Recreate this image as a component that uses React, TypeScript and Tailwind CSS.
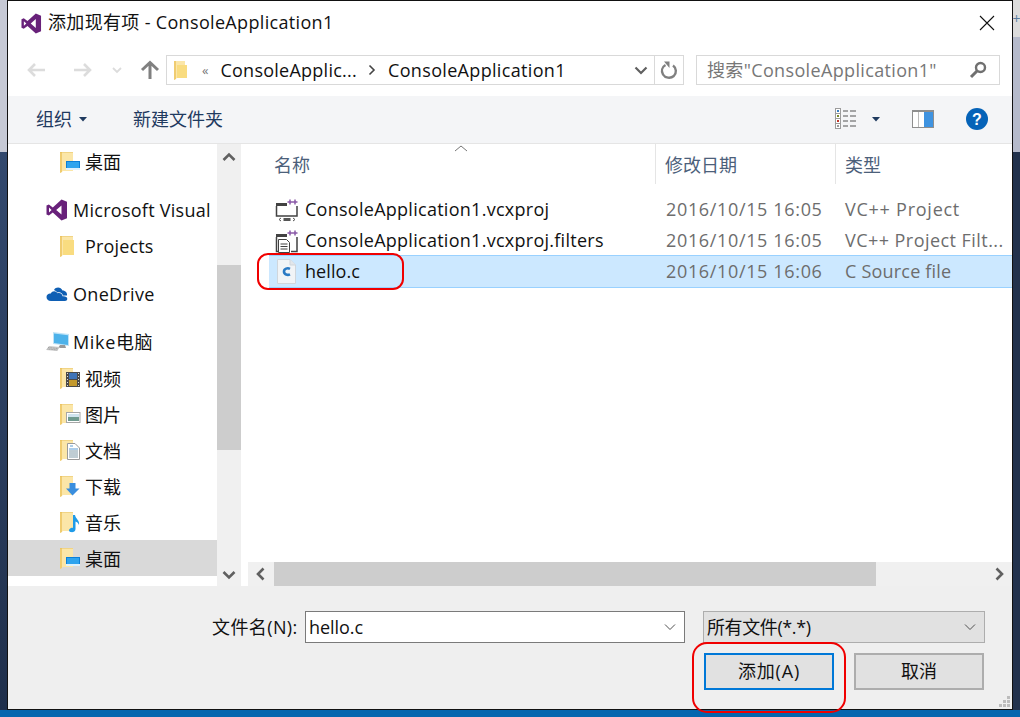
import React from "react";

const VS = ({ s = 22 }: { s?: number }) => (
  <svg width={s} height={s} viewBox="0 0 22 22" className="shrink-0">
    <path fill="#68217a" d="M15.5 0.5 L21 2.8 V19.2 L15.5 21.5 L6.8 13.6 L2.9 16.6 L0.5 15.4 V6.6 L2.9 5.4 L6.8 8.4 Z M15.5 6.4 L10.2 11 L15.5 15.6 Z M3 8.6 V13.4 L5.6 11 Z" fillRule="evenodd" />
  </svg>
);

type Overlay = "none" | "desktop" | "video" | "picture" | "doc" | "down" | "music";

const FolderIcon = ({ o }: { o: Overlay }) => (
  <svg width="24" height="24" viewBox="0 0 24 24" className="shrink-0">
    <path fill="#fbe6a8" d="M2 2 H15 V21 H5 L2 23 Z" />
    <path fill="#f0cc70" d="M2 2 H4 V22 L2 23 Z" />
    <path fill="#e3b84f" d="M2 2 H15 V3 H2 Z" opacity="0.4" />
    {o === "none" && <path fill="#f9dc80" d="M5 6 H16 V21 H5 Z" />}
    {o === "desktop" && (
      <g>
        <rect x="8" y="11" width="14" height="9" fill="#0b7fd8" />
        <rect x="9" y="12" width="12" height="6" fill="#2ea4ee" />
        <rect x="8" y="18" width="14" height="2" fill="#dff1fc" />
      </g>
    )}
    {o === "video" && (
      <g>
        <rect x="8" y="6" width="14" height="15" fill="#4a4a4a" />
        <rect x="11" y="7" width="8" height="6" fill="#3f74b8" />
        <rect x="11" y="14" width="8" height="6" fill="#c49a2e" />
        <path d="M9.5 7v1M9.5 10v1M9.5 13v1M9.5 16v1M9.5 19v1M20.5 7v1M20.5 10v1M20.5 13v1M20.5 16v1M20.5 19v1" stroke="#ddd" strokeWidth="1" />
      </g>
    )}
    {o === "picture" && (
      <g>
        <rect x="8.5" y="10.5" width="13.5" height="10" fill="#fff" stroke="#a6a6a6" />
        <rect x="10" y="12" width="11" height="3" fill="#cfe3ee" />
        <rect x="10" y="15" width="11" height="4" fill="#6f9a8f" />
      </g>
    )}
    {o === "doc" && (
      <g>
        <path d="M9.5 5.5 H17 L21.5 10 V21.5 H9.5 Z" fill="#fff" stroke="#9a9a9a" />
        <path d="M12 8h3M11 11h9" stroke="#5b9bd5" strokeWidth="1" />
        <path d="M11 13h9M11 15h9M11 17h9M11 19h9" stroke="#7f9aa8" strokeWidth="1" />
      </g>
    )}
    {o === "down" && <path fill="#3a8ede" d="M11.5 9 H17.5 V14.5 H21.5 L14.5 21.5 L8 14.5 H11.5 Z" />}
    {o === "music" && (
      <path fill="#1f9be8" d="M15 5 H17 C17.5 9 22 10 21 15 C20 12.5 19 12 17.5 11.5 V19 C17.5 22 14.5 22.5 12.5 22 C10.5 21.5 10.5 19 13 18 C13.8 17.7 14.5 17.7 15 18 Z" />
    )}
  </svg>
);

const OneDrive = () => (
  <svg width="22" height="22" viewBox="0 0 22 22" className="shrink-0">
    <path fill="#0f5fb4" d="M8 7 C10 3.5 15 4 16.5 7.5 C19.5 7.5 21.5 10 21 12.5 L17 12.5 C16.5 10 14 8.5 11.5 9.5 C10.5 8.3 9.3 7.5 8 7 Z" />
    <path fill="#0f5fb4" d="M5 18 C2 18 0.5 16 0.5 14 C0.5 11.5 3 10 4.8 10.5 C6.2 7.5 10 7.5 11.5 10.3 C14 9.2 16.5 11 16.5 13.3 C19 13 21.5 14 21.3 16 C21.2 17.2 20.3 18 19 18 Z" />
  </svg>
);

const PC = () => (
  <svg width="24" height="22" viewBox="0 0 24 22" className="shrink-0">
    <path fill="#bfe3f7" d="M7 1 L23 3 V15 L7 13 Z" />
    <path fill="#4db2ea" d="M8 2.5 L22 4.3 V14 L8 12 Z" />
    <path fill="#9a9a9a" d="M14 14 H19 L20 17 H12 Z" />
    <path fill="#c9c9c9" d="M3 15 L14 16 L11 20 L0 19 Z" />
    <path d="M2 16.5 L12 17.5 M1.5 18 L11.5 19" stroke="#8f8f8f" strokeWidth="0.7" strokeDasharray="1 0.6" />
  </svg>
);

const Chevron = ({ dir, c = "#606060" }: { dir: "up" | "down" | "left" | "right"; c?: string }) => {
  const d = { up: "M1.5 9 L7 3.5 L12.5 9", down: "M1.5 5 L7 10.5 L12.5 5", left: "M9.5 1.5 L4 7 L9.5 12.5", right: "M4.5 1.5 L10 7 L4.5 12.5" }[dir];
  return (
    <svg width="14" height="14" viewBox="0 0 14 14" className="shrink-0">
      <path d={d} fill="none" stroke={c} strokeWidth="2.6" />
    </svg>
  );
};

const SmallChevron = ({ c = "#505050" }: { c?: string }) => (
  <svg width="12" height="8" viewBox="0 0 12 8" className="shrink-0">
    <path d="M1 1.5 L6 6.5 L11 1.5" fill="none" stroke={c} strokeWidth="1" />
  </svg>
);

const Caret = () => (
  <svg width="8" height="5" viewBox="0 0 8 5" className="shrink-0">
    <path d="M0 0 H8 L4 4.5 Z" fill="#1f3a5f" />
  </svg>
);

const Arrow = ({ flip, c, w = 20 }: { flip?: boolean; c: string; w?: number }) => (
  <svg width={w} height="16" viewBox="0 0 20 16" className={flip ? "shrink-0 rotate-180" : "shrink-0"}>
    <path d="M19 8 H3 M9 2 L3 8 L9 14" fill="none" stroke={c} strokeWidth="2.6" />
  </svg>
);

const TreeItem = ({ label, o, sel, first }: { label: string; o: Overlay; sel?: boolean; first?: boolean }) => (
  <div className={`flex items-center h-[36px] pl-[50px] ${sel ? "bg-[#d9d9d9]" : ""}`}>
    <FolderIcon o={o} />
    <span className={`ml-[3px] text-[18px] whitespace-nowrap text-[#111] ${first ? "" : "pt-[2px]"}`}>{label}</span>
  </div>
);

const TopItem = ({ label, icon, mt, tc }: { label: string; icon: React.ReactNode; mt?: boolean; tc: string }) => (
  <div className={`flex items-center h-[36px] pl-[38px] ${mt ? "mt-[12px]" : ""}`}>
    <span className="w-[24px] flex justify-start shrink-0">{icon}</span>
    <span className={`ml-[3px] text-[18px] whitespace-nowrap text-[#111] ${tc}`}>{label}</span>
  </div>
);

const ProjIcon = ({ filt }: { filt?: boolean }) => (
  <svg width="24" height="24" viewBox="0 0 24 24" className="shrink-0">
    <path d="M15 1.5v5M12.5 4h5M20 1.5v5M17.5 4h5" stroke="#8a5aa8" strokeWidth="1.5" />
    <path d="M1 5h11v3h-11z" fill="#424242" />
    {filt ? (
      <g>
        <path d="M1.5 8v14.5h3M22 8v14.5h-6" fill="none" stroke="#424242" strokeWidth="1.5" />
        <path d="M3.5 10.5h8l3 3v10h-11Z" fill="#fff" stroke="#424242" />
        <path d="M5.5 15h7M5.5 17.5h7M5.5 20h7" stroke="#424242" />
      </g>
    ) : (
      <g>
        <path d="M1.5 8v10h3M22 8v10h-3M1 18h21" fill="none" stroke="#424242" strokeWidth="1.5" />
        <path d="M6 20 L4 21.5 L6 23 M18 20 L20 21.5 L18 23" fill="none" stroke="#555" strokeWidth="1" />
        <rect x="8.5" y="20" width="7" height="3" fill="#555" />
      </g>
    )}
  </svg>
);

const CFile = () => (
  <svg width="24" height="26" viewBox="0 0 24 26" className="shrink-0">
    <path d="M2.5 0.5 H15 L20.5 6 V24.5 H2.5 Z" fill="#f1f4f7" stroke="#d0d6dc" />
    <path d="M15 0.5 V6 H20.5" fill="#e2e6ea" stroke="#d0d6dc" />
    <path d="M15 9.8 C12.5 8.6 9 9.6 9 12.6 C9 15.6 12.5 16.6 15 15.4" fill="none" stroke="#2a7ac4" strokeWidth="2.6" />
  </svg>
);

const FileRow = ({ icon, name, date, type, sel, tc }: { icon: React.ReactNode; name: string; date: string; type: string; sel?: boolean; tc: string }) => (
  <div className={`flex items-center shrink-0 ${sel ? "h-[33px] bg-[#cce8ff] border-y border-[#99d1ff]" : "h-[31px] pt-[2px]"}`}>
    <div className="w-[397px] flex items-center pl-[6px] shrink-0">
      <span className="w-[24px] flex justify-center">{icon}</span>
      <span className={`ml-[6px] text-[18px] text-[#111] whitespace-nowrap ${sel ? "tracking-[0.08px]" : "tracking-[0.27px]"}`}>{name}</span>
    </div>
    <div className="w-[179px] shrink-0 text-[18px] text-[#6d6d6d] whitespace-nowrap tracking-[0.65px]">{date}</div>
    <div className={`text-[18px] text-[#6d6d6d] whitespace-nowrap ${tc}`}>{type}</div>
  </div>
);

export default function App() {
  return (
    <div className="relative flex flex-col w-[1020px] h-[717px] overflow-hidden bg-[#0566ae] font-['Open_Sans','Noto_Sans_CJK_SC',sans-serif]">
      <div className="flex h-[710px] shrink-0">
        <div className="w-[7px] flex flex-col shrink-0">
          <div className="h-[152px] bg-[#c6c9d5]" />
          <div className="flex-1 bg-gradient-to-b from-[#33496e] via-[#2a3d5e] to-[#1f2f4b]" />
        </div>
        <div className="w-[1006px] shrink-0 flex flex-col border border-[#111] bg-white">
          {/* Title bar */}
          <div className="h-[44px] shrink-0 flex items-center pl-[13px] pr-[17px]">
            <VS s={21} />
            <span className="ml-[6px] mb-[2px] text-[18px] text-[#111] whitespace-nowrap tracking-[0.33px]">添加现有项 - ConsoleApplication1</span>
            <svg width="16" height="16" viewBox="0 0 16 16" className="ml-auto">
              <path d="M1 1 L15 15 M15 1 L1 15" stroke="#111" strokeWidth="1.1" />
            </svg>
          </div>
          {/* Nav bar */}
          <div className="h-[51px] shrink-0 flex items-center pb-[1px]">
            <div className="ml-[18px]"><Arrow c="#dcdcdc" /></div>
            <div className="ml-[27px]"><Arrow c="#dcdcdc" flip /></div>
            <div className="ml-[19px]"><svg width="10" height="7" viewBox="0 0 10 7"><path d="M1 1 L5 5 L9 1" fill="none" stroke="#dcdcdc" strokeWidth="1.8" /></svg></div>
            <div className="ml-[18px]">
              <svg width="20" height="20" viewBox="0 0 20 20"><path d="M10 19 V3 M2 10 L10 2.5 L18 10" fill="none" stroke="#808080" strokeWidth="3" /></svg>
            </div>
            <div className="ml-[6px] w-[518px] h-[30px] border border-[#d9d9d9] flex items-center">
              <svg width="16" height="20" viewBox="0 0 16 20" className="ml-[6px] shrink-0">
                <path d="M1 1 H12 V18 H4 L1 20 Z" fill="#fbe6a8" />
                <path d="M1 1 H3 V19 L1 20 Z" fill="#f0cc70" />
                <path d="M4 5 H14 V18 H4 Z" fill="#f9dc80" />
              </svg>
              <span className="ml-[13px] text-[13px] text-[#777] leading-none">«</span>
              <span className="ml-[12px] text-[18px] text-[#111] whitespace-nowrap tracking-[0.25px]">ConsoleApplic...</span>
              <svg width="8" height="12" viewBox="0 0 8 12" className="ml-[11px] shrink-0"><path d="M1.5 1.5 L6 6 L1.5 10.5" fill="none" stroke="#444" strokeWidth="1.6" /></svg>
              <span className="ml-[12px] text-[18px] text-[#111] whitespace-nowrap tracking-[0.33px]">ConsoleApplication1</span>
              <svg width="14" height="9" viewBox="0 0 14 9" className="ml-auto shrink-0"><path d="M1.5 1.5 L7 7 L12.5 1.5" fill="none" stroke="#606060" strokeWidth="2.2" /></svg>
              <div className="ml-[6px] w-[29px] h-full border-l border-[#d9d9d9] flex items-center justify-center shrink-0">
                <svg width="18" height="19" viewBox="0 0 18 19"><path d="M5.5 4 C2 6 1 10 3 13.5 C5 17 10.5 18 13.8 15 C16.8 12 16.5 7 13 4.5" fill="none" stroke="#808080" strokeWidth="2.4" /><path d="M4 0.5 H9.5 V7 Z" fill="#808080" /></svg>
              </div>
            </div>
            <div className="ml-[12px] w-[304px] h-[30px] border border-[#d9d9d9] flex items-center pl-[10px]">
              <span className="text-[18px] text-[#777] whitespace-nowrap tracking-[0.35px]">搜索"ConsoleApplication1"</span>
              <svg width="18" height="18" viewBox="0 0 18 18" className="ml-auto mr-[12px] shrink-0">
                <circle cx="11.5" cy="6.5" r="4.5" fill="none" stroke="#707070" strokeWidth="2.4" />
                <path d="M8 10 L2 16" stroke="#707070" strokeWidth="3" />
              </svg>
            </div>
          </div>
          {/* Toolbar */}
          <div className="h-[48px] shrink-0 bg-[#f4f5f7] border-b border-[#e5e5e5] flex items-center pb-[1px]">
            <span className="ml-[28px] text-[18px] leading-none text-[#1f3a5f]">组织</span>
            <span className="ml-[7px]"><Caret /></span>
            <span className="ml-[46px] text-[18px] leading-none text-[#1f3a5f]">新建文件夹</span>
            <svg width="22" height="22" viewBox="0 0 22 22" className="ml-auto shrink-0">
              <g fill="#fff" stroke="#9c9c9c"><rect x="0.5" y="0.5" width="5" height="5" /><rect x="0.5" y="5.5" width="5" height="5" /><rect x="0.5" y="10.5" width="5" height="5" /><rect x="0.5" y="15.5" width="5" height="5" /></g>
              <rect x="2" y="2" width="2" height="2" fill="#3a7fc1" /><rect x="2" y="7" width="2" height="2" fill="#7a8a2a" /><rect x="2" y="12" width="2" height="2" fill="#c0392b" /><rect x="2" y="17" width="2" height="2" fill="#999" />
              <path d="M8 3h5M15 3h6M8 8h5M15 8h6M8 13h5M15 13h6M8 18h5M15 18h6" stroke="#555" />
            </svg>
            <span className="ml-[15px]"><Caret /></span>
            <svg width="22" height="18" viewBox="0 0 22 18" className="ml-[32px] shrink-0">
              <rect x="0.5" y="0.5" width="21" height="17" fill="#fff" stroke="#8e8e8e" />
              <rect x="0" y="0" width="22" height="2" fill="#8e8e8e" />
              <rect x="12" y="2" width="9" height="15" fill="#3f93e0" />
              <path d="M6.5 2v15" stroke="#bbb" />
            </svg>
            <svg width="22" height="22" viewBox="0 0 22 22" className="ml-[32px] mr-[24px] shrink-0">
              <circle cx="11" cy="11" r="11" fill="#0563b8" />
              <text x="11" y="17" textAnchor="middle" fontSize="16" fontWeight="700" fill="#fff" fontFamily="'Liberation Sans',sans-serif">?</text>
            </svg>
          </div>
          {/* Main */}
          <div className="h-[442px] shrink-0 flex">
            <div className="w-[209px] shrink-0 flex flex-col overflow-hidden">
              <TreeItem label="桌面" o="desktop" first />
              <TopItem label="Microsoft Visual" icon={<VS s={22} />} mt tc="tracking-[0.27px]" />
              <div className="flex items-center h-[36px] pl-[50px]">
                <FolderIcon o="none" />
                <span className="ml-[3px] text-[18px] text-[#111] tracking-[0.15px]">Projects</span>
              </div>
              <TopItem label="OneDrive" icon={<OneDrive />} mt tc="tracking-[0.3px]" />
              <TopItem label="Mike电脑" icon={<PC />} mt tc="tracking-[0.65px]" />
              <TreeItem label="视频" o="video" />
              <TreeItem label="图片" o="picture" />
              <TreeItem label="文档" o="doc" />
              <TreeItem label="下载" o="down" />
              <TreeItem label="音乐" o="music" />
              <TreeItem label="桌面" o="desktop" sel />
            </div>
            <div className="w-[24px] shrink-0 bg-[#f0f0f0] flex flex-col">
              <div className="h-[121px] shrink-0 flex flex-col items-center pt-[7px]"><Chevron dir="up" /></div>
              <div className="h-[185px] shrink-0 bg-[#cdcdcd]" />
              <div className="flex-1 flex flex-col items-center justify-end pb-[5px]"><Chevron dir="down" /></div>
            </div>
            <div className="w-[5px] shrink-0" />
            <div className="flex-1 min-w-0 flex flex-col">
              <div className="relative h-[40px] shrink-0 flex text-[#4c607a] text-[18px]">
                <div className="w-[410px] pl-[28px] pt-[8px] border-r border-[#e5e5e5]">名称</div>
                <svg width="14" height="7" viewBox="0 0 14 7" className="absolute left-[208px] top-[1px]"><path d="M1 6 L7 1 L13 6" fill="none" stroke="#777" /></svg>
                <div className="w-[180px] pl-[9px] pt-[8px] border-r border-[#e5e5e5]">修改日期</div>
                <div className="pl-[9px] pt-[8px]">类型</div>
              </div>
              <div className="flex-1 flex flex-col ml-[23px] pt-[9px]">
                <FileRow icon={<ProjIcon />} name="ConsoleApplication1.vcxproj" date="2016/10/15 16:05" type="VC++ Project" tc="tracking-[0.75px]" />
                <FileRow icon={<ProjIcon filt />} name="ConsoleApplication1.vcxproj.filters" date="2016/10/15 16:05" type="VC++ Project Filt..." tc="tracking-[0.45px]" />
                <FileRow icon={<CFile />} name="hello.c" date="2016/10/15 16:06" type="C Source file" tc="tracking-[0.2px]" sel />
              </div>
              <div className="h-[24px] shrink-0 flex bg-[#f0f0f0]">
                <div className="w-[2px] bg-white" />
                <div className="w-[26px] flex items-center justify-center"><Chevron dir="left" /></div>
                <div className="w-[602px] bg-[#cdcdcd]" />
                <div className="flex-1 flex items-center justify-end pr-[6px]"><Chevron dir="right" /></div>
              </div>
            </div>
          </div>
          {/* Bottom */}
          <div className="flex-1 relative bg-[#efefef] flex flex-col">
            <div className="mt-[25px] h-[32px] flex items-center">
              <span className="ml-[204px] w-[93px] text-[18px] text-[#111] whitespace-nowrap tracking-[0.4px]">文件名(N):</span>
              <div className="w-[380px] h-[32px] border border-[#7a7a7a] bg-white flex items-center pl-[3px] pr-[8px]">
                <span className="text-[18px] text-[#111] tracking-[-0.05px]">hello.c</span>
                <span className="ml-auto"><SmallChevron /></span>
              </div>
              <div className="ml-[18px] w-[282px] h-[32px] border border-[#adadad] bg-[#e1e1e1] flex items-center pl-[3px] pr-[8px]">
                <span className="text-[18px] text-[#111] tracking-[-0.4px]">所有文件(*.*)</span>
                <span className="ml-auto"><SmallChevron /></span>
              </div>
            </div>
            <div className="mt-[10px] h-[37px] flex">
              <button className="ml-[696px] w-[130px] h-[37px] border-2 border-[#0078d7] bg-[#e1e1e1] text-[18px] text-[#111] tracking-[0.8px]">添加(A)</button>
              <button className="ml-[20px] w-[130px] h-[37px] border-2 border-[#adadad] bg-[#e1e1e1] text-[18px] text-[#111]">取消</button>
            </div>
            <svg width="12" height="12" viewBox="0 0 12 12" className="absolute right-[1px] bottom-[1px]">
              <path fill="#bcbcbc" d="M8 0h3v3H8zM4 4h3v3H4zM8 4h3v3H8zM0 8h3v3H0zM4 8h3v3H4zM8 8h3v3H8z" />
            </svg>
          </div>
        </div>
        <div className="w-[7px] flex flex-col shrink-0">
          <div className="h-[37px] bg-[#dcdcdc] flex items-center justify-center">
            <span className="text-[14px] leading-none text-[#5b7c9e]">+</span>
          </div>
          <div className="h-[115px] bg-[#b5bacb]" />
          <div className="flex-1 bg-[#22324d]" />
        </div>
      </div>
      {/* Red annotation outlines */}
      <div className="absolute left-[257px] top-[253px] w-[147px] h-[37px] border-2 border-[#f00000] rounded-[11px]" />
      <div className="absolute left-[692px] top-[642px] w-[154px] h-[71px] border-2 border-[#f00000] rounded-[15px]" />
    </div>
  );
}
